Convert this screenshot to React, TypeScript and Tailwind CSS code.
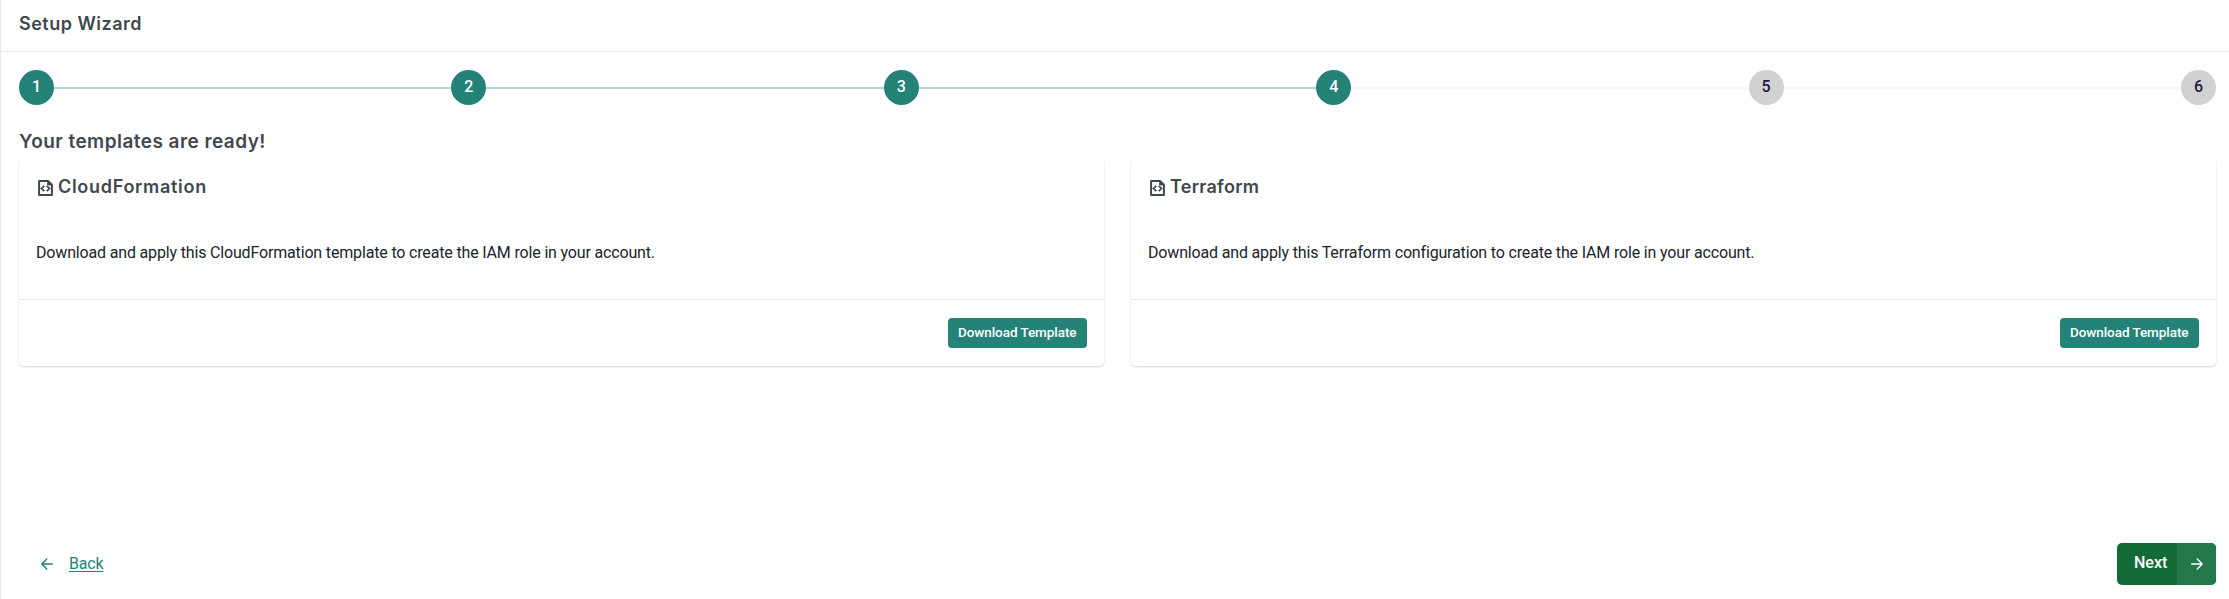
import { Fragment } from "react";

const STEPS = [1, 2, 3, 4, 5, 6];
const CURRENT = 4;

function FileCodeIcon() {
  return (
    <svg width="15" height="16" viewBox="0 0 15 16" fill="none" stroke="currentColor" className="shrink-0">
      <path d="M1.1 1.1H10L13.9 4.8V14.9H1.1Z" strokeWidth="2" strokeLinejoin="round" />
      <path d="M9.6 1.2V5H13.8Z" fill="currentColor" strokeWidth="0.8" />
      <path d="M6.3 5.8L3.5 8.5L6.3 11.2M8.7 5.8L11.5 8.5L8.7 11.2" strokeWidth="1.7" />
    </svg>
  );
}

function ArrowIcon({ left = false }: { left?: boolean }) {
  return (
    <svg width="12" height="12" viewBox="0 0 12 12" fill="none" stroke="currentColor" strokeWidth="1.4" strokeLinecap="round" strokeLinejoin="round">
      <path d={left ? "M11.3 6H0.8M5.8 1L0.8 6L5.8 11" : "M0.7 6H11.2M6.2 1L11.2 6L6.2 11"} />
    </svg>
  );
}

function Stepper() {
  return (
    <div className="flex items-center">
      {STEPS.map((step) => (
        <Fragment key={step}>
          {step > 1 && (
            <div className={step <= CURRENT ? "h-[2px] flex-1 bg-[#b3d7d4]" : "h-[2px] flex-1 bg-[#f5f5fa]"} />
          )}
          <div
            className={
              step <= CURRENT
                ? "flex size-[35px] items-center justify-center rounded-full bg-[#248277] pb-0.5 font-medium text-white"
                : "flex size-[35px] items-center justify-center rounded-full bg-[#d0d2d1] pb-0.5 font-medium text-[#211c3c]"
            }
          >
            {step}
          </div>
        </Fragment>
      ))}
    </div>
  );
}

function TemplateCard({ title, text, titleClass, textClass }: { title: string; text: string; titleClass: string; textClass: string }) {
  return (
    <section className="flex h-[208px] flex-1 flex-col rounded-[5px] bg-white shadow-[0_1px_2px_rgba(0,0,0,0.18)]">
      <div className="flex h-[142px] flex-col border-b border-[#e4e6e7] px-[18px] pt-4">
        <h3 className="flex h-6 items-center font-['Inter',sans-serif] text-[18px] font-semibold text-[#41474e]">
          <span className="mr-[5px] ml-px pt-1"><FileCodeIcon /></span>
          <span className={titleClass}>{title}</span>
        </h3>
        <p className="-ml-px mt-[43px] h-6 text-[16px] leading-6 whitespace-nowrap text-[#20242a]">
          <span className={textClass}>{text}</span>
        </p>
      </div>
      <div className="flex flex-1 items-center justify-end px-[17.5px] pb-px">
        <button className="flex h-[30px] w-[138.5px] items-center justify-center rounded-[4px] bg-[#248277] text-[13.5px] font-medium whitespace-nowrap text-white">
          <span className="tracking-[-0.07px]">Download Template</span>
        </button>
      </div>
    </section>
  );
}

export default function App() {
  return (
    <div className="flex h-[599px] flex-col border-l border-[#e4e9ee] bg-white font-['Roboto',sans-serif] text-[16px]">
      <header className="flex h-[52px] items-center border-b border-[#e4e6e8] px-[18px] pb-[4px]">
        <h1 className="font-['Inter',sans-serif] text-[18px] font-semibold text-[#41474e]">
          <span className="tracking-[0.5px]">Setup Wizard</span>
        </h1>
      </header>
      <main className="flex flex-1 flex-col pr-[13px] pl-[18px] pt-[18px]">
        <Stepper />
        <h2 className="mt-[23px] mb-px flex h-[29px] items-center font-['Inter',sans-serif] text-[19px] font-semibold text-[#41474e]">
          <span className="tracking-[0.45px]">Your templates are ready!</span>
        </h2>
        <div className="flex gap-[27px]">
          <TemplateCard
            title="CloudFormation"
            text="Download and apply this CloudFormation template to create the IAM role in your account."
            titleClass="tracking-[0.7px]"
            textClass="tracking-[-0.165px]"
          />
          <TemplateCard
            title="Terraform"
            text="Download and apply this Terraform configuration to create the IAM role in your account."
            titleClass="tracking-[0.27px]"
            textClass="tracking-[-0.165px]"
          />
        </div>
        <div className="mt-auto mb-[14px] flex h-[42px] items-center justify-between">
          <a className="flex items-center pl-[22px] text-[#248277]">
            <ArrowIcon left />
            <span className="mb-px ml-4 tracking-[-0.2px] underline underline-offset-2">Back</span>
          </a>
          <button className="flex h-[42px] w-[99px] overflow-hidden rounded-[5px] bg-[#136b38] font-medium text-white">
            <span className="flex h-full w-[60px] items-center pb-0.5 pl-[17px]">Next</span>
            <span className="flex h-full flex-1 items-center justify-center bg-[#25784a]"><ArrowIcon /></span>
          </button>
        </div>
      </main>
    </div>
  );
}
